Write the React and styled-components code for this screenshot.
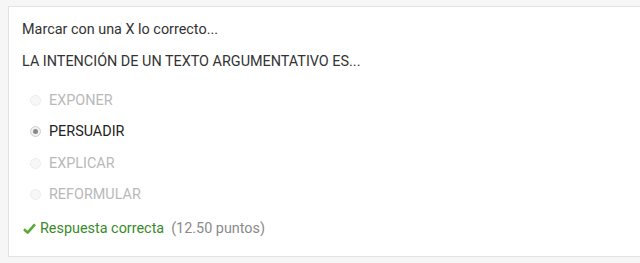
import React from 'react'
import styled, {createGlobalStyle} from 'styled-components'

const GlobalStyle = createGlobalStyle`
  html, body {
    margin: 0;
    padding: 0;
    background: #f6f6f6;
  }
  body {
    font-family: Roboto, "Liberation Sans", sans-serif;
  }
`

const Page = styled.div`
  padding: 6px 0 5px 8px;
`

const Card = styled.div`
  background: #fff;
  border: 1px solid #e2e2e2;
  border-right: none;
  height: 251px;
  box-sizing: border-box;
  padding: 13px 0 0 13px;
`

const Prompt = styled.p`
  margin: 0;
  font-size: 14.4px;
  line-height: 20px;
  color: #333;
  margin-bottom: ${p => p.gap || 0}px;
`

const Options = styled.div`
  display: flex;
  flex-direction: column;
  padding-left: 8px;
  margin-top: 13px;
`

const Option = styled.label`
  display: flex;
  align-items: center;
  height: 31.3px;
  font-size: 14.4px;
  color: ${p => p.disabled ? '#b9b9b9' : '#222'};
`

const Radio = styled.span`
  box-sizing: border-box;
  width: 11px;
  height: 11px;
  border-radius: 50%;
  border: 1px solid ${p => p.disabled ? '#ededed' : '#cfcfcf'};
  background: ${p => p.disabled ? '#f7f7f7' : '#f1f1f1'};
  margin-right: 8px;
  display: flex;
  align-items: center;
  justify-content: center;
  flex-shrink: 0;

  &::after {
    content: '';
    display: ${p => p.checked ? 'block' : 'none'};
    width: 5px;
    height: 5px;
    border-radius: 50%;
    background: #8a8a8a;
  }
`

const Result = styled.div`
  display: flex;
  align-items: center;
  margin-top: 9.5px;
  padding-left: 1px;
  font-size: 14.4px;
`

const Correct = styled.span`
  color: #3a8a2c;
  margin-left: 4px;
`

const Points = styled.span`
  color: #8a8a8a;
  margin-left: 7px;
`

const Check = () => (
  <svg width="13" height="11" viewBox="0 0 13 11">
    <path d="M1 6.2 L4.6 9.6 L12 1.4" fill="none" stroke="#5aa83a" strokeWidth="2.6" strokeLinejoin="round"/>
  </svg>
)

const options = [
  {label: 'EXPONER', disabled: true},
  {label: 'PERSUADIR', checked: true},
  {label: 'EXPLICAR', disabled: true},
  {label: 'REFORMULAR', disabled: true},
]

export default function App() {
  return (
    <Page>
      <GlobalStyle/>
      <Card>
        <Prompt gap={12}>Marcar con una X lo correcto...</Prompt>
        <Prompt>LA INTENCIÓN DE UN TEXTO ARGUMENTATIVO ES...</Prompt>
        <Options>
          {options.map(o => (
            <Option key={o.label} disabled={o.disabled}>
              <Radio checked={o.checked} disabled={o.disabled}/>
              {o.label}
            </Option>
          ))}
        </Options>
        <Result>
          <Check/>
          <Correct>Respuesta correcta</Correct>
          <Points>(12.50 puntos)</Points>
        </Result>
      </Card>
    </Page>
  )
}
